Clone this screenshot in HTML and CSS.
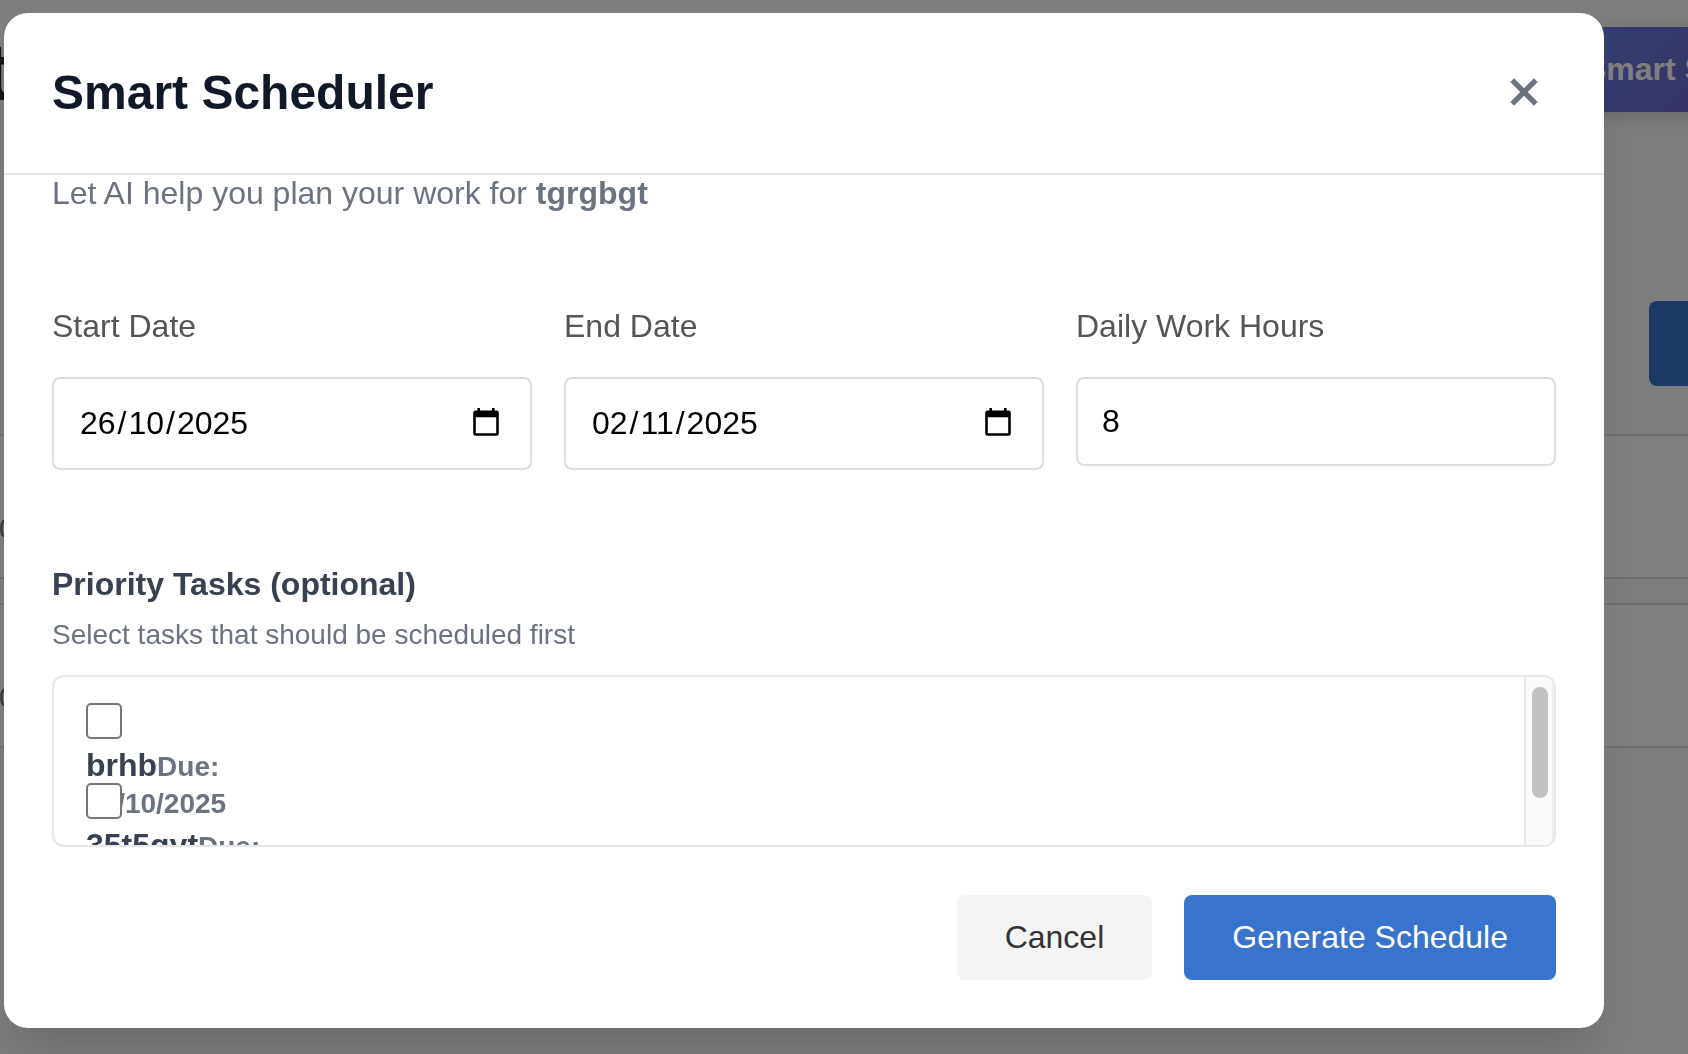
FILE: index.html
```html
<!DOCTYPE html>
<html lang="en">
<head>
<meta charset="utf-8">
<title>Smart Scheduler</title>
<link rel="stylesheet" href="styles.css">
</head>
<body>
<div class="page">
  <header class="page-header">
    <h1 class="page-title">t</h1>
    <div class="smart-btn">Smart Scheduler</div>
  </header>
  <div class="toolbar"><div class="add-btn"></div></div>
  <div class="row-card">0</div>
  <div class="row-card">0</div>
</div>

<div class="overlay">
  <section class="modal" role="dialog" aria-label="Smart Scheduler">
    <header class="modal-header">
      <h2>Smart Scheduler</h2>
      <svg class="close" viewBox="0 0 28 28"><path d="M2.2 2.2l23.6 23.6M25.8 2.2L2.2 25.8"/></svg>
    </header>
    <div class="modal-body">
      <p class="intro">Let AI help you plan your work for <strong>tgrgbgt</strong></p>
      <div class="fields">
        <div class="field">
          <label>Start Date</label>
          <div class="input date">
            <span class="date-value"><span>26</span><span class="sep">/</span><span>10</span><span class="sep">/</span><span>2025</span></span>
            <svg class="calendar" viewBox="0 0 26 28"><path fill-rule="evenodd" d="M4.4 0h2.6v2.6h12V0h2.6v2.6H23.400a2.400 2.400 0 0 1 2.400 2.400V25.400a2.400 2.400 0 0 1-2.400 2.400H2.600a2.400 2.400 0 0 1-2.400-2.400V5a2.400 2.400 0 0 1 2.400-2.400H4.400zM2.800 9.200V25.200H23.200V9.200z"/></svg>
          </div>
        </div>
        <div class="field">
          <label>End Date</label>
          <div class="input date">
            <span class="date-value"><span>02</span><span class="sep">/</span><span>11</span><span class="sep">/</span><span>2025</span></span>
            <svg class="calendar" viewBox="0 0 26 28"><path fill-rule="evenodd" d="M4.4 0h2.6v2.6h12V0h2.6v2.6H23.400a2.400 2.400 0 0 1 2.400 2.400V25.400a2.400 2.400 0 0 1-2.400 2.400H2.600a2.400 2.400 0 0 1-2.400-2.400V5a2.400 2.400 0 0 1 2.400-2.400H4.400zM2.800 9.200V25.200H23.200V9.200z"/></svg>
          </div>
        </div>
        <div class="field">
          <label>Daily Work Hours</label>
          <div class="input number">8</div>
        </div>
      </div>
      <h3>Priority Tasks (optional)</h3>
      <p class="hint">Select tasks that should be scheduled first</p>
      <div class="task-list">
        <div class="tasks">
          <div class="task">
            <span class="checkbox"></span>
            <div class="task-name">brhb<span class="due">Due:</span></div>
            <div class="due due-date">26/10/2025</div>
          </div>
          <div class="task">
            <span class="checkbox"></span>
            <div class="task-name">35t5gyt<span class="due">Due:</span></div>
          </div>
        </div>
        <div class="scroll-track"><div class="scroll-thumb"></div></div>
      </div>
      <div class="actions">
        <button class="btn cancel">Cancel</button>
        <button class="btn primary">Generate Schedule</button>
      </div>
    </div>
  </section>
</div>
</body>
</html>
```
FILE: styles.css
```css
* { box-sizing: border-box; }
body {
  margin: 0;
  height: 1054px;
  overflow: hidden;
  font: 32px/36px "Liberation Sans", Arial, sans-serif;
  background: #f9fafb;
}
h1, h2, h3, p { margin: 0; }

/* Page behind the dialog */
.page {
  width: 1950px;
  margin-left: -17px;
  padding-top: 27px;
}
.page-header {
  display: flex;
  justify-content: space-between;
  height: 85px;
}
.page-title {
  padding-left: 1px;
  font-size: 80px;
  line-height: 90px;
  color: #2f2c27;
}
.smart-btn {
  width: 365px;
  padding: 24px 0 0 17px;
  font-weight: 700;
  color: #fff;
  background: linear-gradient(135deg, #667eea, #764ba2);
  box-shadow: 0 4px 16px rgba(0, 0, 0, .15);
}
.toolbar {
  display: flex;
  padding: 189px 0 48px 1666px;
}
.add-btn {
  width: 200px;
  height: 85px;
  border-radius: 8px;
  background: #3873cc;
}
.row-card {
  height: 145px;
  margin-bottom: 24px;
  padding: 75px 0 0 14px;
  border: 2px solid #ddd;
  background: #fff;
  color: #6b7280;
  font-size: 28px;
}

.overlay {
  position: fixed;
  inset: 0;
  padding: 13px 4px;
  background: rgba(0, 0, 0, .5);
}
.modal {
  width: 1600px;
  height: 1015px;
  border-radius: 24px;
  overflow: hidden;
  background: #fff;
  box-shadow: 0 40px 50px -10px rgba(0, 0, 0, .1), 0 20px 20px -10px rgba(0, 0, 0, .04);
}
.modal-header {
  display: flex;
  align-items: center;
  justify-content: space-between;
  height: 162px;
  padding: 0 66px 2px 48px;
  border-bottom: 2px solid #e5e7eb;
}
.modal-header h2 {
  padding-top: 2px;
  font-size: 48px;
  line-height: 56px;
  color: #111827;
}
.close {
  width: 28px;
  height: 28px;
  fill: none;
  stroke: #6b7280;
  stroke-width: 5.4;
}
.modal-body { padding: 0 48px; }
.intro { color: #6b7280; }
.fields {
  display: grid;
  grid-template-columns: repeat(3, 480px);
  gap: 32px;
  align-items: start;
  margin-top: 97px;
}
.field label {
  display: block;
  margin-bottom: 33px;
  color: #555;
}
.input {
  border: 2px solid #ddd;
  border-radius: 8px;
  color: #000;
}
.date {
  display: flex;
  justify-content: space-between;
  height: 93px;
  padding: 26px 31px 0 26px;
}
.date-value { display: flex; }
.sep { padding: 0 2px; }
.calendar {
  width: 26px;
  height: 28px;
  margin-top: 3px;
}
.number {
  height: 89px;
  padding: 24px;
}
h3 {
  margin-top: 96px;
  font-size: 32px;
  color: #374151;
}
.hint {
  margin: 17px 0 24px;
  font-size: 28px;
  line-height: 32px;
  color: #6b7280;
}
.task-list {
  display: flex;
  justify-content: space-between;
  height: 172px;
  border: 2px solid #e5e7eb;
  border-radius: 12px;
  overflow: hidden;
}
.tasks { padding: 26px 32px; }
.task {
  height: 80px;
  font-weight: 700;
  color: #374151;
}
.checkbox {
  display: block;
  position: relative;
  width: 36px;
  height: 36px;
  margin-bottom: 8px;
  border: 2px solid #767676;
  border-radius: 5px;
  background: #fff;
}
.due {
  font-size: 28px;
  color: #6b7280;
}
.due-date { padding-top: 1px; }
.scroll-track {
  width: 30px;
  padding: 10px 6px;
  border-left: 2px solid #e8e8e8;
  border-right: 2px solid #ededed;
  background: #fafafa;
}
.scroll-thumb {
  width: 16px;
  height: 111px;
  border-radius: 8px;
  background: #c1c1c1;
}
.actions {
  display: flex;
  justify-content: flex-end;
  gap: 32px;
  margin-top: 48px;
}
.btn {
  height: 85px;
  padding: 0 48px 2px;
  border: 0;
  border-radius: 8px;
  font: inherit;
}
.cancel { background: #f4f4f4; color: #333; }
.primary { background: #3873cc; color: #fff; }
```
